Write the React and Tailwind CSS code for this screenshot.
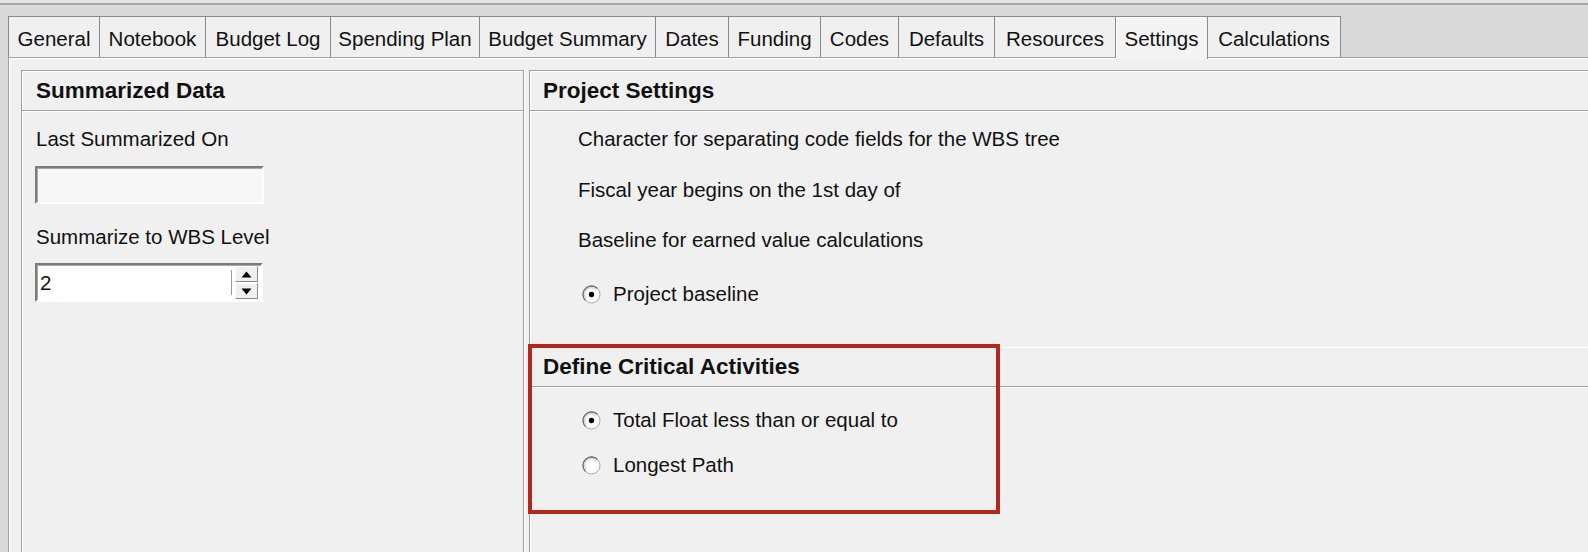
import React from "react";

const tabs = [
  { label: "General", cls: "w-[92px] border-l" },
  { label: "Notebook", cls: "w-[106px]" },
  { label: "Budget Log", cls: "w-[125px]" },
  { label: "Spending Plan", cls: "w-[149px]" },
  { label: "Budget Summary", cls: "w-[176px]" },
  { label: "Dates", cls: "w-[73px]" },
  { label: "Funding", cls: "w-[92px]" },
  { label: "Codes", cls: "w-[78px]" },
  { label: "Defaults", cls: "w-[96px]" },
  { label: "Resources", cls: "w-[121px]" },
  { label: "Settings", cls: "w-[92px]", active: true },
  { label: "Calculations", cls: "w-[133px]" },
];

function Radio({ checked }) {
  return (
    <svg width="19" height="19" viewBox="0 0 19 19" className="shrink-0">
      <circle cx="9.5" cy="9.5" r="8.5" fill="#ffffff" stroke="#a8a8a8" strokeWidth="1" />
      <path d="M3.5 15.5 A8 8 0 0 1 15.5 3.5" fill="none" stroke="#6e6e6e" strokeWidth="1.3" />
      <path d="M4.6 13.8 A6.5 6.5 0 0 1 13.8 4.6" fill="none" stroke="#c0c0c0" strokeWidth="1" />
      {checked && <circle cx="9.5" cy="9.5" r="2.7" fill="#000000" />}
    </svg>
  );
}

function Arrow({ up }) {
  return (
    <svg width="11" height="7" viewBox="0 0 11 7">
      {up ? <polygon points="0.5,6.5 10.5,6.5 5.5,0.5" fill="#000" /> : <polygon points="0.5,0.5 10.5,0.5 5.5,6.5" fill="#000" />}
    </svg>
  );
}

export default function App() {
  return (
    <div className="relative w-[1588px] h-[552px] overflow-hidden bg-[#d9d9d9] flex flex-col font-['Liberation_Sans',Arial,sans-serif] text-[#111111] text-[20.5px] leading-[24px]">
      <div className="h-[3px] bg-[#e4e4e4]" />
      <div className="h-[2px] bg-[#a6a6a6]" />
      <div className="h-[11px]" />
      {/* Tab strip */}
      <div className="h-[41px] flex items-start pl-[8px] shrink-0">
        {tabs.map((t) =>
          t.active ? (
            <div
              key={t.label}
              className={`${t.cls} h-[43px] relative z-10 bg-[#f4f4f4] border-t border-r border-[#8a8a8a] shadow-[inset_1px_1px_0_#ffffff] flex justify-center pt-[10px] whitespace-nowrap`}
            >
              {t.label}
            </div>
          ) : (
            <div
              key={t.label}
              className={`${t.cls} h-[41px] bg-[#f0f0f0] border-t border-r border-[#8a8a8a] flex justify-center pt-[10px] whitespace-nowrap`}
            >
              {t.label}
            </div>
          )
        )}
      </div>
      {/* Content */}
      <div className="flex-1 flex min-h-0">
        <div className="w-[8px] shrink-0 bg-[#d9d9d9]" />
        <div className="flex-1 flex gap-[5px] bg-[#f0f0f0] border-l border-t border-[#a0a0a0] shadow-[inset_1px_1px_0_#ffffff] pl-[12px] pt-[12px] min-w-0">
          {/* Left box */}
          <div className="w-[503px] shrink-0 border-l border-t border-r border-[#a0a0a0] shadow-[inset_1px_1px_0_#ffffff,1px_0_0_#ffffff] flex flex-col">
            <div className="h-[40px] flex items-center pl-[14px] border-b border-[#a0a0a0] shadow-[0_1px_0_#ffffff] font-bold text-[22.5px]">
              Summarized Data
            </div>
            <div className="pl-[13px]">
              <div className="mt-[16px] pl-[1px]">Last Summarized On</div>
              <div className="mt-[15px] w-[229px] h-[38px] bg-[#f7f7f7] border-2 border-t-[#7c7c7c] border-l-[#7c7c7c] border-r-[#ffffff] border-b-[#ffffff] shadow-[inset_1px_1px_0_#a8a8a8]" />
              <div className="mt-[21px] pl-[1px]">Summarize to WBS Level</div>
              <div className="mt-[14px] w-[228px] h-[39px] bg-white border-2 border-t-[#7c7c7c] border-l-[#7c7c7c] border-r-[#ffffff] border-b-[#ffffff] shadow-[inset_1px_1px_0_#a8a8a8] flex items-center">
                <div className="flex-1 pl-[3px]">2</div>
                <div className="w-[2px] h-[25px] border-l border-[#9a9a9a] bg-white" />
                <div className="ml-[2px] mr-[3px] flex flex-col gap-[1px]">
                  <div className="w-[23px] h-[16px] bg-[#f0f0f0] border border-t-[#ffffff] border-l-[#ffffff] border-r-[#8a8a8a] border-b-[#8a8a8a] flex items-center justify-center">
                    <Arrow up />
                  </div>
                  <div className="w-[23px] h-[16px] bg-[#f0f0f0] border border-t-[#ffffff] border-l-[#ffffff] border-r-[#8a8a8a] border-b-[#8a8a8a] flex items-center justify-center">
                    <Arrow />
                  </div>
                </div>
              </div>
            </div>
          </div>
          {/* Right box */}
          <div className="flex-1 min-w-0 border-l border-t border-[#a0a0a0] shadow-[inset_1px_1px_0_#ffffff] flex flex-col">
            <div className="h-[40px] flex items-center pl-[13px] border-b border-[#a0a0a0] shadow-[0_1px_0_#ffffff] font-bold text-[22.5px]">
              Project Settings
            </div>
            <div className="pl-[48px] flex flex-col">
              <div className="mt-[16px]">Character for separating code fields for the WBS tree</div>
              <div className="mt-[27px]">Fiscal year begins on the 1st day of</div>
              <div className="mt-[26px]">Baseline for earned value calculations</div>
              <div className="mt-[30px] flex items-center gap-[12px] pl-[4px]">
                <Radio checked />
                <span>Project baseline</span>
              </div>
            </div>
            <div className="mt-[41px] shadow-[inset_0_1px_0_#ffffff] flex flex-col">
              <div className="h-[40px] flex items-center pl-[13px] pt-[1px] border-b border-[#a0a0a0] shadow-[0_1px_0_#ffffff] font-bold text-[22.5px]">
                Define Critical Activities
              </div>
              <div className="pl-[52px] flex flex-col">
                <div className="mt-[21px] flex items-center gap-[12px]">
                  <Radio checked />
                  <span>Total Float less than or equal to</span>
                </div>
                <div className="mt-[21px] flex items-center gap-[12px]">
                  <Radio />
                  <span>Longest Path</span>
                </div>
              </div>
            </div>
          </div>
        </div>
      </div>
      {/* Annotation highlight */}
      <div className="absolute left-[528px] top-[344px] w-[472px] h-[170px] border-4 border-[#b3271f] pointer-events-none" />
    </div>
  );
}
